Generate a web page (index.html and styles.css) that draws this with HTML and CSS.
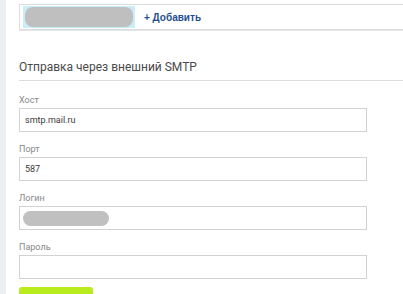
FILE: index.html
```html
<!DOCTYPE html>
<html lang="ru">
<head>
<meta charset="utf-8">
<link rel="stylesheet" href="styles.css">
</head>
<body>
<div class="page">
  <div class="strip"></div>
  <div class="main">
    <div class="recipients">
      <div class="chip-wrap"><span class="chip"></span></div>
      <a class="add">+ Добавить</a>
    </div>
    <h2 class="section-title">Отправка через внешний SMTP</h2>
    <div class="form">
      <div class="field">
        <label class="label">Хост</label>
        <div class="input">smtp.mail.ru</div>
      </div>
      <div class="field">
        <label class="label">Порт</label>
        <div class="input">587</div>
      </div>
      <div class="field">
        <label class="label">Логин</label>
        <div class="input"><span class="blur-pill"></span></div>
      </div>
      <div class="field">
        <label class="label">Пароль</label>
        <div class="input"></div>
      </div>
      <div class="button"></div>
    </div>
  </div>
</div>
</body>
</html>
```
FILE: styles.css
```css
html, body {
  margin: 0;
  padding: 0;
  background: #fff;
  overflow: hidden;
}
body {
  width: 403px;
  height: 294px;
  font-family: "Open Sans", "Liberation Sans", Arial, sans-serif;
}
.page {
  display: flex;
  height: 294px;
  overflow: hidden;
}
.strip {
  width: 6px;
  flex: none;
  background: #ebeef3;
}
.main {
  flex: 1;
  min-width: 0;
  margin-left: 13px;
  padding-top: 4px;
}
.recipients {
  display: flex;
  align-items: center;
  height: 24px;
  border: 1px solid #dcdcdc;
  border-right: none;
  box-shadow: 0 1px 0 #e4e6ea;
  padding: 0 3px;
}
.chip-wrap {
  display: flex;
  background: #c9edf9;
  padding: 1px 2px;
  width: 108px;
}
.chip {
  display: block;
  width: 108px;
  height: 20px;
  border-radius: 8px;
  background: #bfbfbf;
}
.add {
  margin-left: 9px;
  font-family: "Liberation Sans", Arial, sans-serif;
  font-weight: bold;
  font-size: 10px;
  color: #1f4f8f;
}
.section-title {
  margin: 29px 0 0 0;
  padding-bottom: 5px;
  border-bottom: 1px solid #dedede;
  font-family: Roboto, "Open Sans", sans-serif;
  font-weight: normal;
  font-size: 12px;
  line-height: 16px;
  color: #4a4a4a;
}
.form {
  padding-top: 13px;
  width: 348px;
}
.field {
  margin-bottom: 11px;
}
.label {
  display: block;
  font-family: Roboto, "Open Sans", sans-serif;
  font-size: 9px;
  line-height: 12px;
  color: #888;
  margin-bottom: 2px;
}
.input {
  display: flex;
  align-items: center;
  box-sizing: border-box;
  height: 24px;
  border: 1px solid #d2d2d2;
  padding-left: 5px;
  font-family: Roboto, "Liberation Sans", Arial, sans-serif;
  font-size: 9px;
  color: #3a3a3a;
}
.blur-pill {
  display: block;
  width: 86px;
  height: 15px;
  margin-left: -2px;
  border-radius: 8px;
  background: #c0c0c0;
}
.button {
  width: 74px;
  height: 20px;
  margin-top: -3px;
  border-radius: 3px 3px 0 0;
  background: #b8ec1c;
}
```
